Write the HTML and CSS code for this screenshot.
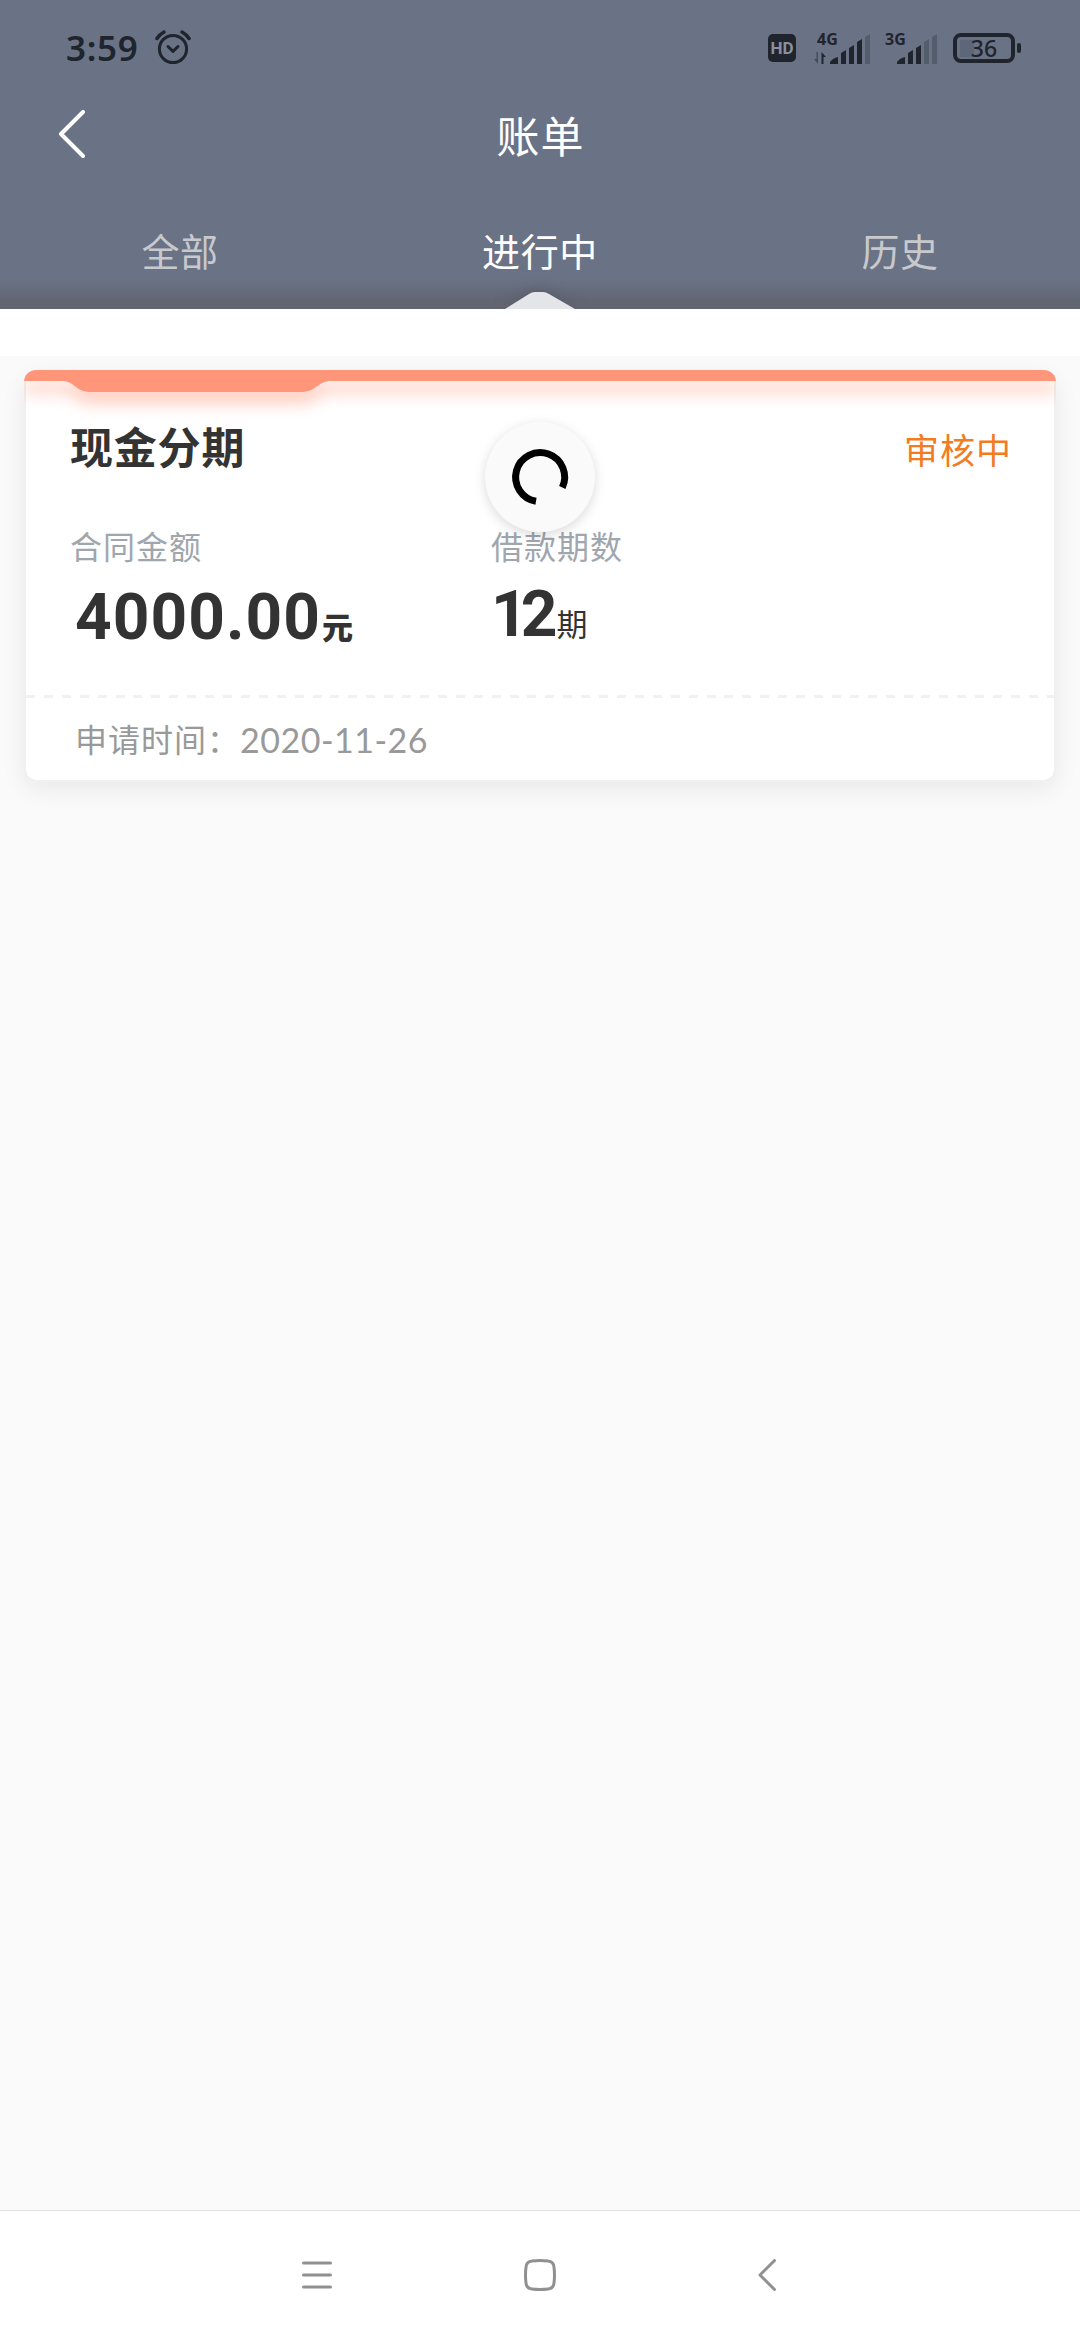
FILE: index.html
```html
<!DOCTYPE html>
<html lang="zh-CN">

<head>
    <meta charset="UTF-8">
    <meta name="viewport" content="width=device-width, initial-scale=1.0">
    <title>账单</title>
    <link rel="stylesheet" href="styles.css">
</head>

<body>
    <div class="header">
        <div class="status">
            <span class="time">3:59</span>
            <svg class="alarm" width="36" height="36" viewBox="0 0 36 36">
                <circle cx="18" cy="20" r="13.6" />
                <path d="M13 17.5l5 4.8 5-4.8" />
                <path class="bell" d="M2 9.5Q4.500 5.500 9 3M34 9.500Q31.500 5.500 27 3" />
            </svg>
            <span class="hd">HD</span>
            <svg class="signal" width="57" height="46" viewBox="0 -6 57 46">
                <text x="3" y="14">4G</text>
                <path d="M16 33v-2q3-4 8-5v7zM27 33V22l5-3v14zM35 33V17l5-3v19zM43 33V11l5-3v25z" />
                <path class="off" d="M51 33V6l5-3v30z" />
                <path class="down" d="M4 21v12l-4-5h2.500v-7z" />
                <path d="M7.500 33V21l4.500 5H9.500v7z" />
            </svg>
            <svg class="signal signal-2" width="57" height="46" viewBox="0 -6 57 46">
                <text x="4" y="14">3G</text>
                <path d="M16 33v-2q3-4 8-5v7zM27 33V22l5-3v14zM35 33V17l5-3v19z" />
                <path class="off" d="M43 33V11l5-3v25zM51 33V6l5-3v30z" />
            </svg>
            <div class="battery"><span>36</span></div>
        </div>
        <div class="title">
            <svg class="back" width="28" height="48" viewBox="0 0 28 48">
                <path d="M25 2L3 24l22 22" />
            </svg>
            <h1>账单</h1>
        </div>
        <ul class="tabs">
            <li>全部</li>
            <li class="active">进行中
                <svg class="arrow" width="90" height="26" viewBox="0 0 90 26">
                    <path d="M10 26L34 11Q37 9 40 9H48Q51 9 54 11L80 26z" />
                </svg>
            </li>
            <li>历史</li>
        </ul>
    </div>
    <div class="gap"></div>

    <div class="content">
        <div class="card">
            <svg class="card-top" width="1032" height="60" viewBox="0 0 1032 60">
                <path d="M0 0H1032V11H308C292 11 294 22 276 22H68C50 22 52 11 37 11H0z" />
            </svg>
            <div class="card-head">
                <h2>现金分期</h2>
                <span class="state">审核中</span>
            </div>
            <div class="card-info">
                <div class="amount">
                    <p class="label">合同金额</p>
                    <p class="value">4000.00<b>元</b></p>
                </div>
                <div class="period">
                    <p class="label">借款期数</p>
                    <p class="value">12<i>期</i></p>
                </div>
            </div>
            <div class="dash"></div>
            <p class="date"><span>申请时间：</span><span class="day">2020-11-26</span></p>
        </div>
        <div class="loading">
            <svg width="110" height="110" viewBox="0 0 110 110">
                <path d="M51 79.200A24.500 24.500 0 1 1 77.300 65.500" />
            </svg>
        </div>
    </div>

    <div class="nav">
        <svg width="40" height="40" viewBox="0 0 40 40">
            <path d="M6.500 8H33.500M6.500 20H33.500M6.500 32H33.500" />
        </svg>
        <svg width="40" height="40" viewBox="0 0 40 40">
            <path d="M12 6Q20 5 28 6Q33.500 6.500 34 12Q35 20 34 28Q33.500 33.500 28 34Q20 35 12 34Q6.500 33.500 6 28Q5 20 6 12Q6.500 6.500 12 6z" />
        </svg>
        <svg width="40" height="40" viewBox="0 0 40 40">
            <path d="M31.500 5.500L17 20l14.500 14.500" />
        </svg>
    </div>
</body>

</html>
```
FILE: styles.css
```css
* {
    box-sizing: border-box;
    margin: 0;
    padding: 0;
}

body {
    display: flex;
    flex-direction: column;
    height: 2340px;
    background-color: #fafafa;
    font-family: Roboto, "Noto Sans CJK SC", sans-serif;
}

ul {
    list-style: none;
}

svg {
    display: block;
    flex: none;
    fill: none;
    stroke-linecap: round;
    stroke-linejoin: round;
}

.header {
    height: 309px;
    background: linear-gradient(#6a7285 0, #6a7285 280px, #616673 300px, #616570 309px);
}

.status {
    display: flex;
    align-items: center;
    height: 96px;
    padding-left: 66px;
    color: #20242c;
}

.time {
    width: 89px;
    margin-top: -2px;
    font: 600 35px "Noto Sans", sans-serif;
    letter-spacing: 0.7px;
}

.alarm {
    margin-top: -3px;
    stroke: #20242c;
    stroke-width: 3;
}

.alarm .bell {
    stroke-width: 3.5;
}

.hd {
    width: 28px;
    height: 28px;
    margin-left: 577px;
    border-radius: 5px;
    background-color: #20242c;
    color: #8990a0;
    font: bold 17px/29px Roboto, sans-serif;
    text-align: center;
}

.signal {
    margin-left: 18px;
    fill: #20242c;
    font: bold 16px "Noto Sans", sans-serif;
    overflow: visible;
}

.signal-2 {
    margin-left: 10px;
}

.signal .off {
    fill: #555c6c;
}

.signal .down {
    fill: #454b58;
}

.battery {
    position: relative;
    width: 62px;
    height: 30px;
    margin-left: 15px;
    border: 4px solid #20242c;
    border-radius: 8px;
    background: linear-gradient(#5e667a, #5e667a) 3px center / 14px 17px no-repeat;
    font: 500 23px/23px "Noto Sans", sans-serif;
    text-align: center;
}

.battery::after {
    content: "";
    position: absolute;
    top: 6px;
    right: -10px;
    width: 4px;
    height: 10px;
    border-radius: 2px;
    background-color: #20242c;
}

.title {
    display: flex;
    align-items: center;
    height: 78px;
    padding: 0 58px;
}

.back {
    margin-top: -2px;
    stroke: #fff;
    stroke-width: 4;
}

.title h1 {
    flex: 1;
    margin: -3px 27px 0 0;
    color: #fff;
    font-size: 43px;
    font-weight: 400;
    letter-spacing: 1px;
    text-align: center;
}

.tabs {
    display: flex;
    height: 135px;
}

.tabs li {
    position: relative;
    flex: 1;
    color: #c8c9cd;
    font-size: 38px;
    line-height: 158px;
    letter-spacing: 0.6px;
    text-align: center;
}

.tabs .active {
    color: #fff;
}

.arrow {
    position: absolute;
    left: 135px;
    bottom: 0;
    fill: #e4e5e8;
    filter: drop-shadow(0 0 7px #555964);
}

.gap {
    position: relative;
    height: 47px;
    background-color: #fff;
}

.content {
    position: relative;
    flex: 1;
    padding: 14px 24px;
}

.card {
    position: relative;
    height: 412px;
    border: 2px solid #f0f0f0;
    border-top: 0;
    border-radius: 12px;
    background-color: #fff;
    box-shadow: 0 8px 24px rgba(0, 0, 0, 0.07);
}

.card-top {
    position: absolute;
    top: 0;
    left: -2px;
    border-radius: 12px 12px 0 0;
    fill: #ff967a;
    overflow: hidden;
}

.card-top path {
    filter: drop-shadow(0 12px 8px rgba(255, 150, 122, 0.45));
}

.card-head {
    display: flex;
    justify-content: space-between;
    align-items: center;
    height: 144px;
    padding: 13px 42px 0 44px;
}

.card-head h2 {
    position: relative;
    margin-top: -7px;
    color: #333;
    font-size: 43px;
    letter-spacing: 0.8px;
}

.state {
    color: #f27c22;
    font-size: 35px;
    letter-spacing: 1px;
}

.card-info {
    display: flex;
    height: 181px;
    padding: 1px 0 0 44px;
}

.amount {
    width: 421px;
}

.label {
    color: #a0a6ad;
    font-size: 32px;
    line-height: 66px;
    letter-spacing: 1px;
}

.value {
    color: #333;
    font-size: 64px;
    font-weight: bold;
    line-height: 68px;
    letter-spacing: 1px;
}

.amount .value {
    padding: 3px 0 0 5px;
}

.period .value {
    letter-spacing: -7px;
}

.value b,
.value i {
    margin-left: 1px;
    font-size: 31px;
    font-style: normal;
}

.value i {
    margin-left: 6px;
    font-weight: 400;
}

.dash {
    height: 3px;
    background: repeating-linear-gradient(90deg, #f1f1f1 0, #f1f1f1 9px, transparent 9px, transparent 17.91px);
}

.date {
    display: flex;
    padding-left: 49px;
    color: #999;
    font: 32px/84px "Noto Sans", "Noto Sans CJK SC", sans-serif;
    letter-spacing: 1px;
}

.day {
    font: 34px/83px Lato, sans-serif;
    letter-spacing: 0.5px;
}

.loading {
    position: absolute;
    top: 66px;
    left: 485px;
    border-radius: 50%;
    background-color: #fafafa;
    box-shadow: 0 3px 12px rgba(0, 0, 0, 0.15);
}

.loading svg {
    stroke: #000;
    stroke-width: 7;
    stroke-linecap: butt;
}

.nav {
    display: flex;
    justify-content: center;
    align-items: center;
    gap: 183px;
    height: 130px;
    padding-bottom: 1px;
    border-top: 1px solid #e2e2e2;
    background-color: #fff;
}

.nav svg {
    stroke: #909090;
    stroke-width: 3;
}
```
